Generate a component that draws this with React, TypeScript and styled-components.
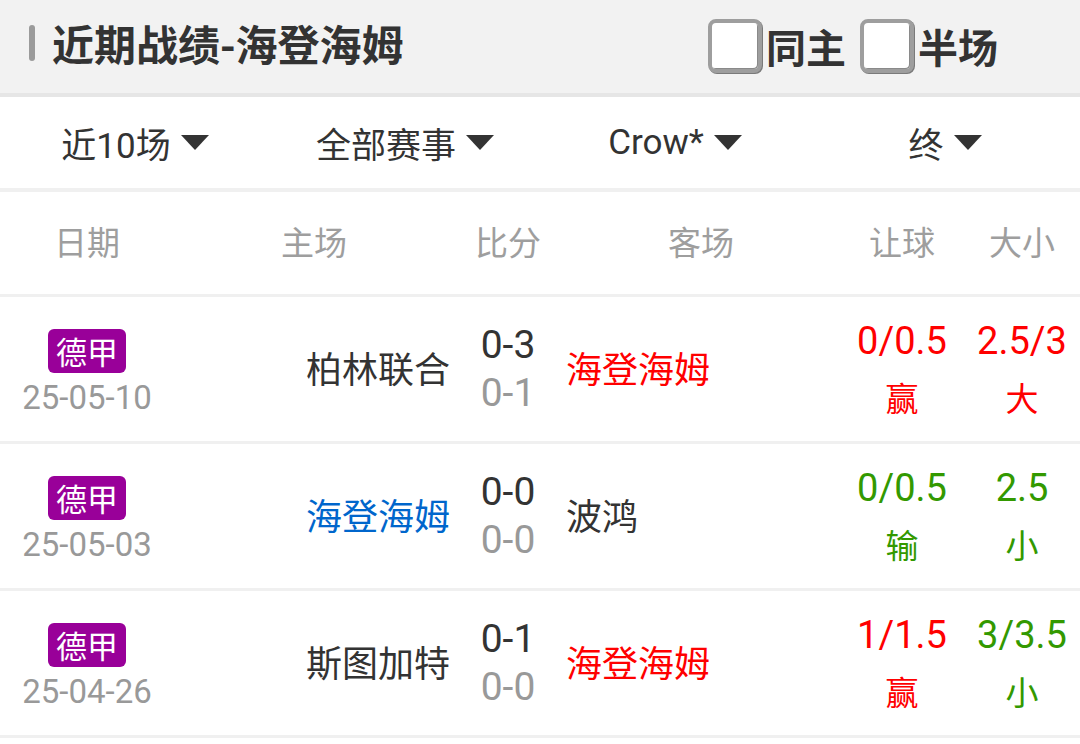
import React from "react";
import styled, { createGlobalStyle } from "styled-components";

const GlobalStyle = createGlobalStyle`
  html, body {
    margin: 0;
    padding: 0;
    background: #ffffff;
    font-family: Roboto, "Noto Sans CJK SC", sans-serif;
  }
`;

const Page = styled.div`
  width: 1080px;
  min-height: 744px;
  background: #ffffff;
`;

const Header = styled.div`
  box-sizing: border-box;
  height: 97px;
  display: flex;
  align-items: center;
  background: #f2f2f2;
  border-bottom: 4px solid #e6e6e6;
  padding: 0 82px 8px 29px;
`;

const TitleBar = styled.span`
  width: 6px;
  height: 36px;
  border-radius: 3px;
  background: #9b9b9b;
  margin-right: 17px;
`;

const Title = styled.h1`
  margin: 0;
  font-size: 42px;
  line-height: 50px;
  font-weight: 700;
  color: #333333;
  font-family: "Noto Sans CJK SC", sans-serif;
`;

const Toggles = styled.div`
  margin-left: auto;
  margin-top: 6px;
  display: flex;
  align-items: center;
  gap: 14px;
`;

const Toggle = styled.label`
  display: flex;
  align-items: center;
  gap: 4px;
  font-size: 40px;
  font-weight: 700;
  color: #333333;
  font-family: "Noto Sans CJK SC", sans-serif;
`;

const Box = styled.span`
  box-sizing: border-box;
  width: 54px;
  height: 54px;
  border: 4px solid #9e9e9e;
  border-radius: 8px;
  background: #ffffff;
  box-shadow: inset -1px -1px 0 #8a8a8a, 1px 1px 0 #7a7a7a;
`;

const FilterRow = styled.div`
  height: 91px;
  display: grid;
  grid-template-columns: repeat(4, 1fr);
  border-bottom: 4px solid #f0f0f0;
`;

const Filter = styled.div`
  display: flex;
  align-items: center;
  justify-content: center;
  gap: 10px;
  font-size: 35px;
  color: #333333;
`;

const Caret = styled.span`
  width: 0;
  height: 0;
  border-left: 14px solid transparent;
  border-right: 14px solid transparent;
  border-top: 15px solid #333333;
`;

const Cols = "174px 280px 108px 278px 124px 116px";

const HeadRow = styled.div`
  height: 102px;
  display: grid;
  grid-template-columns: ${Cols};
  align-items: center;
  border-bottom: 3px solid #f0f0f0;
`;

const HeadCell = styled.div`
  text-align: center;
  font-size: 33px;
  line-height: 40px;
  margin-bottom: 4px;
  color: #9e9e9e;
  font-family: "Noto Sans CJK SC", sans-serif;
`;

const Row = styled.div`
  height: 144px;
  display: grid;
  grid-template-columns: ${Cols};
  align-items: center;
  border-bottom: 3px solid #f0f0f0;
`;

const DateCell = styled.div`
  display: flex;
  flex-direction: column;
  align-items: center;
  gap: 7px;
  margin-top: 6px;
`;

const League = styled.span`
  height: 44px;
  line-height: 44px;
  padding: 0 8px;
  border-radius: 6px;
  background: #990099;
  color: #ffffff;
  font-size: 31px;
  font-family: "Noto Sans CJK SC", sans-serif;
`;

const DateText = styled.span`
  font-size: 33px;
  line-height: 36px;
  color: #999999;
`;

const Team = styled.div<{ side: "home" | "away"; tone: string }>`
  font-size: 36px;
  line-height: 44px;
  margin-bottom: 4px;
  color: ${(p) => p.tone};
  text-align: ${(p) => (p.side === "home" ? "right" : "left")};
  padding: ${(p) => (p.side === "home" ? "0 4px 0 0" : "0 0 0 4px")};
  font-family: "Noto Sans CJK SC", sans-serif;
`;

const Stack = styled.div`
  display: flex;
  flex-direction: column;
  align-items: center;
`;

const Score = styled.span<{ half?: boolean }>`
  font-size: 39px;
  line-height: 48px;
  color: ${(p) => (p.half ? "#999999" : "#333333")};
`;

const Odds = styled.span<{ tone: string }>`
  font-size: 38px;
  line-height: 58px;
  color: ${(p) => p.tone};
`;

const Verdict = styled.span<{ tone: string }>`
  font-size: 33px;
  line-height: 58px;
  margin-top: -2px;
  color: ${(p) => p.tone};
  font-family: "Noto Sans CJK SC", sans-serif;
`;

const RED = "#ff0000";
const GREEN = "#339900";
const BLUE = "#0066cc";
const DARK = "#333333";

type Match = {
  date: string;
  home: string;
  homeTone: string;
  away: string;
  awayTone: string;
  full: string;
  half: string;
  hc: string;
  hcRes: string;
  hcTone: string;
  ou: string;
  ouRes: string;
  ouTone: string;
};

const matches: Match[] = [
  { date: "25-05-10", home: "柏林联合", homeTone: DARK, away: "海登海姆", awayTone: RED, full: "0-3", half: "0-1", hc: "0/0.5", hcRes: "赢", hcTone: RED, ou: "2.5/3", ouRes: "大", ouTone: RED },
  { date: "25-05-03", home: "海登海姆", homeTone: BLUE, away: "波鸿", awayTone: DARK, full: "0-0", half: "0-0", hc: "0/0.5", hcRes: "输", hcTone: GREEN, ou: "2.5", ouRes: "小", ouTone: GREEN },
  { date: "25-04-26", home: "斯图加特", homeTone: DARK, away: "海登海姆", awayTone: RED, full: "0-1", half: "0-0", hc: "1/1.5", hcRes: "赢", hcTone: RED, ou: "3/3.5", ouRes: "小", ouTone: GREEN },
];

export default function App() {
  return (
    <Page>
      <GlobalStyle />
      <Header>
        <TitleBar />
        <Title>近期战绩-海登海姆</Title>
        <Toggles>
          <Toggle><Box />同主</Toggle>
          <Toggle><Box />半场</Toggle>
        </Toggles>
      </Header>
      <FilterRow>
        <Filter>近10场<Caret /></Filter>
        <Filter>全部赛事<Caret /></Filter>
        <Filter>Crow*<Caret /></Filter>
        <Filter>终<Caret /></Filter>
      </FilterRow>
      <HeadRow>
        <HeadCell>日期</HeadCell>
        <HeadCell>主场</HeadCell>
        <HeadCell>比分</HeadCell>
        <HeadCell>客场</HeadCell>
        <HeadCell>让球</HeadCell>
        <HeadCell>大小</HeadCell>
      </HeadRow>
      {matches.map((m) => (
        <Row key={m.date}>
          <DateCell>
            <League>德甲</League>
            <DateText>{m.date}</DateText>
          </DateCell>
          <Team side="home" tone={m.homeTone}>{m.home}</Team>
          <Stack>
            <Score>{m.full}</Score>
            <Score half>{m.half}</Score>
          </Stack>
          <Team side="away" tone={m.awayTone}>{m.away}</Team>
          <Stack>
            <Odds tone={m.hcTone}>{m.hc}</Odds>
            <Verdict tone={m.hcTone}>{m.hcRes}</Verdict>
          </Stack>
          <Stack>
            <Odds tone={m.ouTone}>{m.ou}</Odds>
            <Verdict tone={m.ouTone}>{m.ouRes}</Verdict>
          </Stack>
        </Row>
      ))}
    </Page>
  );
}
